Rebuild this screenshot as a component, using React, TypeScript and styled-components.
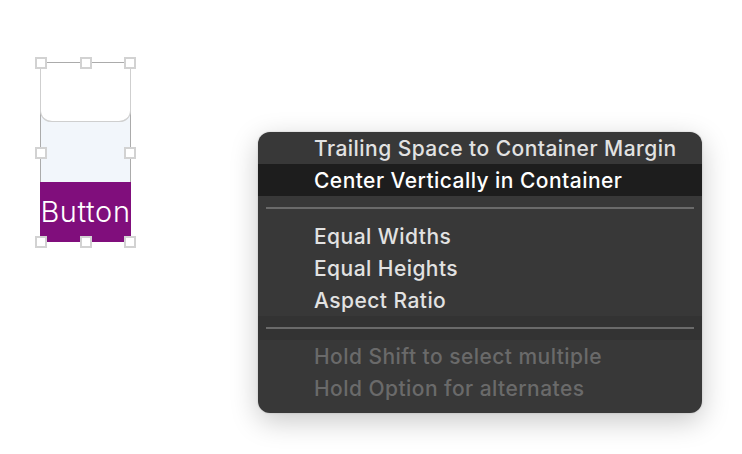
import React from 'react';
import styled, { createGlobalStyle } from 'styled-components';

const GlobalStyle = createGlobalStyle`
  html, body {
    margin: 0;
    padding: 0;
    background: #ffffff;
  }
  body {
    font-family: Inter, "Noto Sans", "Liberation Sans", sans-serif;
  }
`;

const Canvas = styled.div`
  width: 742px;
  height: 454px;
  display: flex;
  align-items: flex-start;
  padding: 0 0 0 40px;
  box-sizing: border-box;
  overflow: hidden;
`;

const Selection = styled.div`
  position: relative;
  margin-top: 62px;
  width: 91px;
  height: 180px;
  display: flex;
  flex-direction: column;
  box-sizing: border-box;
  border: 1px solid #ababab;
  border-bottom: none;
  background: #f2f6fb;
`;

const TopCap = styled.div`
  height: 58px;
  background: #ffffff;
  border-bottom: 1px solid #cfcfcf;
  border-radius: 0 0 11px 11px;
  box-shadow: -1px 0 0 #cfcfcf, 1px 0 0 #cfcfcf;
`;

const Fill = styled.div`
  flex: 1;
`;

const ButtonFace = styled.div`
  height: 60px;
  margin: 0 -1px;
  background: #800e7c;
  color: #ffffff;
  font-size: 29px;
  font-weight: 300;
  line-height: 60px;
  text-align: center;
  letter-spacing: 0.6px;
  white-space: nowrap;
`;

const Handle = styled.span<{ $x: string; $y: string }>`
  position: absolute;
  left: ${p => p.$x};
  top: ${p => p.$y};
  width: 12px;
  height: 12px;
  margin: -6px 0 0 -6px;
  box-sizing: border-box;
  background: #ffffff;
  border: 2px solid #d2d2d2;
`;

const Menu = styled.div`
  margin: 132px 0 0 127px;
  width: 444px;
  padding-bottom: 9px;
  background: #383838;
  border-radius: 12px;
  box-shadow: 0 8px 28px rgba(0, 0, 0, 0.22), 0 0 2px rgba(0, 0, 0, 0.2);
  overflow: hidden;
`;

const Item = styled.div<{ $active?: boolean; $disabled?: boolean }>`
  height: 32px;
  padding-left: 56px;
  display: flex;
  align-items: center;
  font-size: 21px;
  font-weight: 500;
  letter-spacing: 0.45px;
  white-space: nowrap;
  color: ${p => (p.$disabled ? '#6a6a6a' : p.$active ? '#ffffff' : '#e2e2e2')};
  background: ${p => (p.$active ? '#1d1d1d' : 'transparent')};
`;

const Separator = styled.div<{ $band?: boolean }>`
  height: 24px;
  display: flex;
  align-items: center;
  padding: 0 8px;
  background: ${p => (p.$band ? '#333333' : 'transparent')};

  &::after {
    content: '';
    flex: 1;
    height: 2px;
    background: #6a6a6a;
  }
`;

const handles = [
  ['0%', '0%'], ['50%', '0%'], ['100%', '0%'],
  ['0%', '50%'], ['100%', '50%'],
  ['0%', '100%'], ['50%', '100%'], ['100%', '100%'],
];

export default function App() {
  return (
    <>
      <GlobalStyle />
      <Canvas>
        <Selection>
          <TopCap />
          <Fill />
          <ButtonFace>Button</ButtonFace>
          {handles.map(([x, y]) => (
            <Handle key={x + y} $x={x} $y={y} />
          ))}
        </Selection>
        <Menu>
          <Item>Trailing Space to Container Margin</Item>
          <Item $active>Center Vertically in Container</Item>
          <Separator />
          <Item>Equal Widths</Item>
          <Item>Equal Heights</Item>
          <Item>Aspect Ratio</Item>
          <Separator $band />
          <Item $disabled>Hold Shift to select multiple</Item>
          <Item $disabled>Hold Option for alternates</Item>
        </Menu>
      </Canvas>
    </>
  );
}
